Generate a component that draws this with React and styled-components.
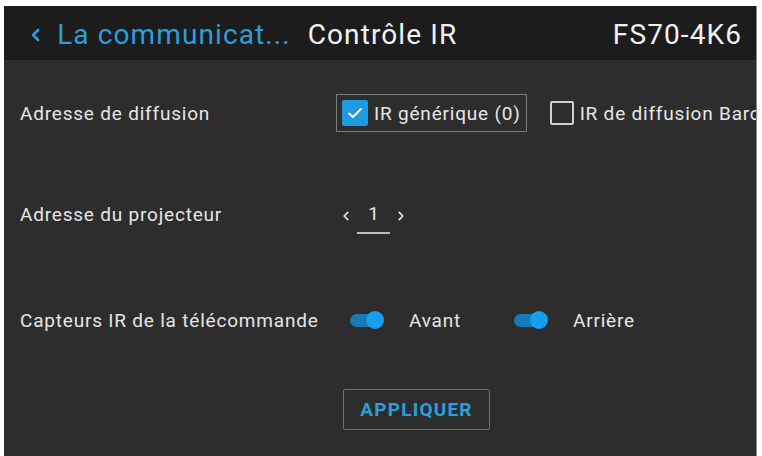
import React, { useState } from 'react'
import styled, { createGlobalStyle } from 'styled-components'

const GlobalStyle = createGlobalStyle`
    html, body {
        margin: 0;
        padding: 0;
        background: #fff;
    }
    body {
        font-family: Roboto, "Liberation Sans", sans-serif;
    }
`

const Panel = styled.div`
    margin: 6px 5px 0 4px;
    height: 450px;
    background-color: #2d2d2d;
    border-right: 1px solid #8a8a8a;
    overflow: hidden;
    display: flex;
    flex-direction: column;
`

const Header = styled.header`
    height: 54px;
    flex-shrink: 0;
    box-sizing: border-box;
    padding: 3px 14px 0 26px;
    background-color: #1c1c1c;
    display: flex;
    align-items: center;
    font-size: 28px;
    letter-spacing: 1.1px;
    color: #f2f2f2;
    white-space: nowrap;
`

const Back = styled.span`
    display: flex;
    align-items: center;
    gap: 16px;
    color: #2a9fdc;
    margin-right: 17px;
`

const Title = styled.span`
    flex: 1;
`

const Content = styled.section`
    padding: 34px 0 0 16px;
    display: flex;
    flex-direction: column;
`

const Row = styled.div`
    display: grid;
    grid-template-columns: 316px 1fr;
    align-items: center;
    height: 38px;
    margin-bottom: ${p => p.$after || 0}px;
`

const Label = styled.div`
    font-size: 19px;
    letter-spacing: 0.8px;
    color: #e6e6e6;
    white-space: nowrap;
`

const Controls = styled.div`
    display: flex;
    align-items: center;
    white-space: nowrap;
    gap: ${p => p.$gap || 0}px;
`

const CheckOption = styled.label`
    display: flex;
    align-items: center;
    gap: 6px;
    height: 38px;
    box-sizing: border-box;
    padding: 0 5px 0 5px;
    border: 1.5px solid ${p => p.$focus ? '#7c7c7c' : 'transparent'};
    font-size: 19px;
    letter-spacing: 0.8px;
    color: #e6e6e6;
`

const Box = styled.span`
    width: ${p => p.$checked ? 26 : 24}px;
    height: ${p => p.$checked ? 26 : 24}px;
    flex-shrink: 0;
    box-sizing: border-box;
    border-radius: 2px;
    display: flex;
    align-items: center;
    justify-content: center;
    background: ${p => p.$checked ? '#1d9be2' : 'transparent'};
    border: ${p => p.$checked ? 'none' : '2px solid #d0d0d0'};
`

const Stepper = styled.div`
    display: flex;
    align-items: center;
    gap: 7px;
    margin-left: 6px;
    color: #e6e6e6;
    font-size: 19px;
`

const Value = styled.span`
    position: relative;
    width: 33px;
    line-height: 22px;
    text-align: center;
    &::after {
        content: '';
        position: absolute;
        left: 0;
        right: 0;
        top: 29px;
        height: 2px;
        background: #bdbdbd;
    }
`

const Toggle = styled.span`
    position: relative;
    width: 34px;
    height: 18px;
    display: inline-block;
    margin-left: ${p => p.$first ? 14 : 0}px;
    flex-shrink: 0;
    &::before {
        content: '';
        position: absolute;
        left: 0;
        top: 3px;
        width: 30px;
        height: 13px;
        border-radius: 7px;
        background: #1879b8;
    }
    &::after {
        content: '';
        position: absolute;
        left: ${p => p.$on ? 16 : 0}px;
        top: 0;
        width: 18px;
        height: 18px;
        border-radius: 50%;
        background: #169ff0;
    }
`

const ToggleText = styled.span`
    font-size: 19px;
    letter-spacing: 0.8px;
    color: #e6e6e6;
    margin-left: 25px;
    width: ${p => p.$w || 'auto'};
`

const Button = styled.button`
    margin-left: 323px;
    width: 147px;
    height: 41px;
    background: transparent;
    border: 1.5px solid #6f6f6f;
    border-radius: 2px;
    color: #2a9fdc;
    font-family: inherit;
    font-size: 19px;
    font-weight: 700;
    letter-spacing: 1.2px;
    padding: 0;
`

function Chevron({ dir = 'left', size = 12, color = 'currentColor', width = 2.5 }) {
    const d = dir === 'left' ? 'M8 2 L3 7 L8 12' : 'M3 2 L8 7 L3 12'
    return (
        <svg width={size * 0.8} height={size} viewBox="0 0 11 14">
            <path d={d} fill="none" stroke={color} strokeWidth={width} strokeLinecap="round" strokeLinejoin="round" />
        </svg>
    )
}

export default function App() {
    const [generic, setGeneric] = useState(true)
    const [barco, setBarco] = useState(false)
    const [front, setFront] = useState(true)
    const [back, setBack] = useState(true)
    const [address, setAddress] = useState(1)

    return (
        <>
            <GlobalStyle />
            <Panel>
                <Header>
                    <Back>
                        <Chevron size={14} width={2.6} />
                        La communicat...
                    </Back>
                    <Title>Contrôle IR</Title>
                    <span>FS70-4K6</span>
                </Header>
                <Content>
                    <Row $after={63}>
                        <Label>Adresse de diffusion</Label>
                        <Controls $gap={17}>
                            <CheckOption $focus onClick={() => setGeneric(!generic)}>
                                <Box $checked={generic}>
                                    {generic && (
                                        <svg width="16" height="12" viewBox="0 0 16 12">
                                            <path d="M2 6.5 L6 10 L14 2" fill="none" stroke="#fff" strokeWidth="2" strokeLinecap="round" strokeLinejoin="round" />
                                        </svg>
                                    )}
                                </Box>
                                IR générique (0)
                            </CheckOption>
                            <CheckOption onClick={() => setBarco(!barco)}>
                                <Box $checked={barco} />
                                IR de diffusion Barco
                            </CheckOption>
                        </Controls>
                    </Row>
                    <Row $after={68}>
                        <Label>Adresse du projecteur</Label>
                        <Stepper>
                            <span onClick={() => setAddress(Math.max(0, address - 1))}><Chevron size={10} width={2.4} /></span>
                            <Value>{address}</Value>
                            <span onClick={() => setAddress(address + 1)}><Chevron dir="right" size={10} width={2.4} /></span>
                        </Stepper>
                    </Row>
                    <Row $after={50}>
                        <Label>Capteurs IR de la télécommande</Label>
                        <Controls>
                            <Toggle $first $on={front} onClick={() => setFront(!front)} />
                            <ToggleText $w="105px">Avant</ToggleText>
                            <Toggle $on={back} onClick={() => setBack(!back)} />
                            <ToggleText>Arrière</ToggleText>
                        </Controls>
                    </Row>
                    <Button>APPLIQUER</Button>
                </Content>
            </Panel>
        </>
    )
}
